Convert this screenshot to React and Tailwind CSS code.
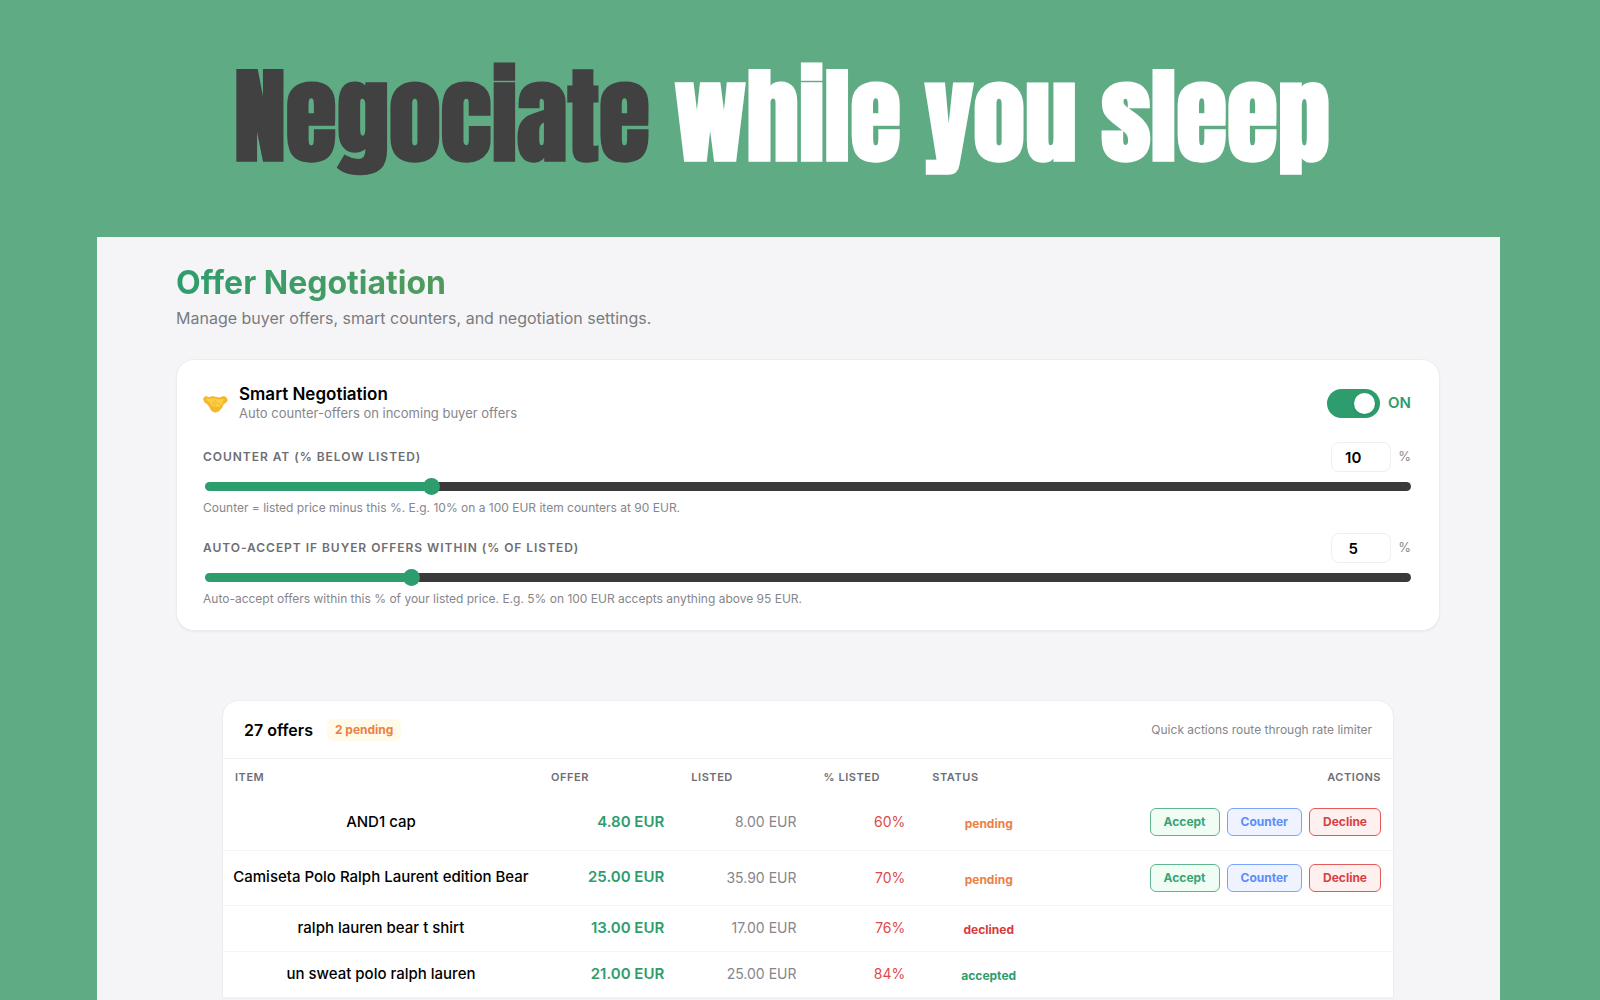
import React, { useState } from "react";

const offers = [
  { item: "AND1 cap", offer: "4.80 EUR", listed: "8.00 EUR", pct: "60%", status: "pending" },
  { item: "Camiseta Polo Ralph Laurent edition Bear", offer: "25.00 EUR", listed: "35.90 EUR", pct: "70%", status: "pending" },
  { item: "ralph lauren bear t shirt", offer: "13.00 EUR", listed: "17.00 EUR", pct: "76%", status: "declined" },
  { item: "un sweat polo ralph lauren", offer: "21.00 EUR", listed: "25.00 EUR", pct: "84%", status: "accepted" },
];

const statusColors = {
  pending: "text-[#ec7f45]",
  declined: "text-[#d93a3a]",
  accepted: "text-[#2d9d6e]",
};

const Handshake = () => (
  <svg viewBox="0 0 25 20" className="w-[25px] h-5 shrink-0" aria-hidden="true">
    <path
      d="M0.6 5.4 2.4 3.4 6 4.6 9.4 3.6 13 4.4 16.5 5 20.4 3.6 22.8 4.2 24.4 7 22.6 9.8 20.2 11 18.8 14.6 15.8 18 12.2 19.2 8.6 17.6 6.4 13.6 4.6 11 1.6 9Z"
      fill="#f8b824"
      stroke="#f3ad25"
      strokeWidth="0.8"
      strokeLinejoin="round"
    />
    <path d="M3 6 8 5.6 12 5.6 16 6.6 21 5.8 19.6 9.8 17.4 13.4 13 14.6 8.6 12.4 6.6 9.4Z" fill="#fccd45" />
    <path
      d="M12.6 7.4 9.4 10.6 11.2 11.4 14.4 9.6 18.2 13M15 15.4 12.2 13"
      fill="none"
      stroke="#e9a526"
      strokeWidth="0.6"
      strokeLinecap="round"
    />
  </svg>
);

const PercentSetting = ({ id, label, hint, min, max, value, onChange }) => {
  // track fill follows the thumb centre, not the raw value
  const ratio = (value - min) / (max - min);
  const stop = `calc(${ratio * 100}% + ${8 - ratio * 16}px)`;

  return (
    <div>
      <div className="flex items-center justify-between">
        <label htmlFor={id} className="text-xs font-semibold tracking-[0.08em] uppercase text-[#6e6e73]">
          {label}
        </label>
        <div className="flex items-center gap-[7px]">
          <input
            type="number"
            aria-label={label}
            min={min}
            max={max}
            value={value}
            onChange={(e) => onChange(Number(e.target.value))}
            className="w-[60px] h-[30px] pr-4 text-center text-[15px] font-semibold text-black bg-white border border-[#efeff1] rounded-lg [appearance:textfield] [&::-webkit-inner-spin-button]:appearance-none"
          />
          <span className="text-[13px] text-[#8a8a8e]">%</span>
        </div>
      </div>
      <div className="mt-[10px] pl-0.5">
        <input
          id={id}
          type="range"
          min={min}
          max={max}
          value={value}
          onChange={(e) => onChange(Number(e.target.value))}
          style={{ backgroundImage: `linear-gradient(to right, #2d9d6e ${stop}, #3a3a3a ${stop})` }}
          className="block w-full h-[9px] rounded-full appearance-none [&::-webkit-slider-thumb]:appearance-none [&::-webkit-slider-thumb]:size-[17px] [&::-webkit-slider-thumb]:rounded-full [&::-webkit-slider-thumb]:bg-[#2d9d6e]"
        />
      </div>
      <p className="mt-2 text-xs leading-[18px] text-[#86868b]">{hint}</p>
    </div>
  );
};

const App = () => {
  const [enabled, setEnabled] = useState(true);
  const [counterAt, setCounterAt] = useState(10);
  const [autoAccept, setAutoAccept] = useState(5);

  return (
    <div className="h-screen overflow-hidden flex flex-col bg-[#5fab84] font-['Inter',sans-serif]">
      <h1 className="pt-12 h-[237px] shrink-0 pr-9 text-center whitespace-nowrap text-[104px] leading-[136px] font-bold font-['Anton','Liberation_Sans_Narrow','Liberation_Sans',sans-serif] text-white">
        <span className="text-[#414141]">Negociate</span> while you sleep
      </h1>

      <main className="flex-1 ml-[97px] mr-[100px] pl-[79px] pr-[60px] pt-7 bg-[#f5f5f7]">
        <h2 className="w-fit text-[32px] leading-9 font-bold bg-linear-to-r from-[#2d9d6e] to-[#4f9a5c] bg-clip-text text-transparent">
          Offer Negotiation
        </h2>
        <p className="mt-[5px] text-base leading-6 text-[#7b7b80]">
          Manage buyer offers, smart counters, and negotiation settings.
        </p>

        <section className="mt-[29px] pl-[26px] pr-7 pt-6 pb-[22px] bg-white border border-[#ededf0] rounded-[18px] shadow-xs">
          <div className="flex items-center justify-between">
            <div className="flex items-center gap-[11px]">
              <Handshake />
              <div>
                <h3 className="text-[17px] leading-5 font-semibold text-black">Smart Negotiation</h3>
                <p className="text-[13px] leading-[18px] text-[#86868b]">Auto counter-offers on incoming buyer offers</p>
              </div>
            </div>
            <label className="flex items-center gap-2 text-[15px] font-semibold text-[#2d9d6e]">
              <input
                type="checkbox"
                role="switch"
                checked={enabled}
                onChange={(e) => setEnabled(e.target.checked)}
                className="appearance-none flex items-center w-[53px] h-[29px] px-1 rounded-full bg-gray-300 checked:bg-[#2d9d6e] before:size-[21px] before:rounded-full before:bg-white before:shadow checked:before:ml-[23px]"
              />
              {enabled ? "ON" : "OFF"}
            </label>
          </div>

          <div className="mt-5 flex flex-col gap-4">
            <PercentSetting
              id="counter-at"
              label="Counter at (% below listed)"
              hint="Counter = listed price minus this %. E.g. 10% on a 100 EUR item counters at 90 EUR."
              min={1}
              max={50}
              value={counterAt}
              onChange={setCounterAt}
            />
            <PercentSetting
              id="auto-accept"
              label="Auto-accept if buyer offers within (% of listed)"
              hint="Auto-accept offers within this % of your listed price. E.g. 5% on 100 EUR accepts anything above 95 EUR."
              min={0}
              max={30}
              value={autoAccept}
              onChange={setAutoAccept}
            />
          </div>
        </section>

        <section className="mt-[69px] mx-[46px] bg-white border border-[#ededf0] rounded-t-2xl">
          <div className="flex items-center justify-between h-[58px] px-[21px] border-b border-[#f2f2f4]">
            <div className="flex items-center gap-[14px]">
              <h3 className="text-base font-semibold text-black">27 offers</h3>
              <span className="px-2 rounded-md bg-[#fffbe8] text-xs leading-[22px] font-bold text-[#ec7f45]">2 pending</span>
            </div>
            <p className="text-xs text-[#86868b]">Quick actions route through rate limiter</p>
          </div>

          <table className="w-full table-fixed">
            <thead>
              <tr className="h-9 text-left text-[11px] tracking-wider uppercase text-[#6e6e73]">
                <th className="w-[27%] pl-3 font-semibold">Item</th>
                <th className="w-[12%] pl-3 font-semibold">Offer</th>
                <th className="w-[11.3%] pl-3 font-semibold">Listed</th>
                <th className="w-[9.3%] pl-3 font-semibold">% Listed</th>
                <th className="w-[11.7%] pl-3 font-semibold">Status</th>
                <th className="pr-3 text-right font-semibold">Actions</th>
              </tr>
            </thead>
            <tbody>
              {offers.map((row) => (
                <tr
                  key={row.item}
                  className={`text-[15px] border-b border-[#f5f5f7] ${row.status === "pending" ? "h-[55px]" : "h-[46px]"}`}
                >
                  <td className="text-center font-medium text-black whitespace-nowrap">{row.item}</td>
                  <td className="pr-[15px] text-right font-semibold text-[#2d9d6e]">{row.offer}</td>
                  <td className="pr-[15px] text-right text-sm text-[#86868b]">{row.listed}</td>
                  <td className="pr-[15px] text-right text-sm text-[#de4a4a]">{row.pct}</td>
                  <td className={`pt-1 text-center text-xs font-bold ${statusColors[row.status]}`}>{row.status}</td>
                  <td className="pr-3">
                    {row.status === "pending" && (
                      <div className="flex justify-end gap-[7px] text-xs font-bold">
                        <button className="h-7 px-[13px] border border-[#5fb58e] rounded-md bg-[#effdf5] text-[#3aa476]">Accept</button>
                        <button className="h-7 px-[13px] border border-[#7ba3fb] rounded-md bg-[#eef3ff] text-[#5b8df8]">Counter</button>
                        <button className="h-7 px-[13px] border border-[#e05a5a] rounded-md bg-[#fff0f0] text-[#d94040]">Decline</button>
                      </div>
                    )}
                  </td>
                </tr>
              ))}
            </tbody>
          </table>
        </section>
      </main>
    </div>
  );
};

export default App;
